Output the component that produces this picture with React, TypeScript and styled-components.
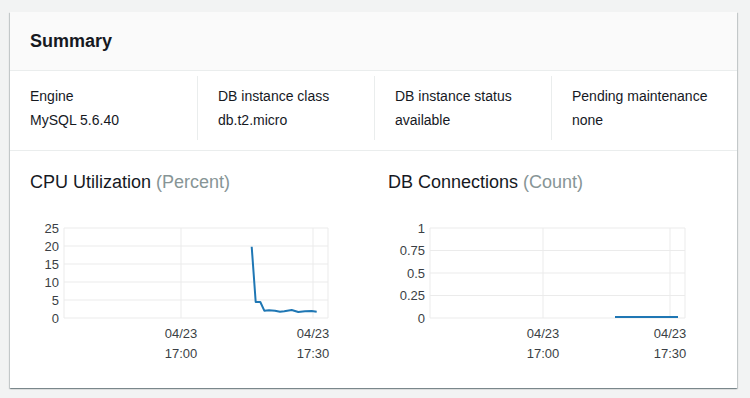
import React from 'react';
import styled, { createGlobalStyle } from 'styled-components';

const GlobalStyle = createGlobalStyle`
  html, body {
    margin: 0;
    padding: 0;
    background: #f2f3f3;
    font-family: 'Liberation Sans', Arial, sans-serif;
    color: #16191f;
  }
`;

const Page = styled.div`
  padding: 12px 13px 0 10px;
  height: 398px;
  box-sizing: border-box;
`;

const Card = styled.section`
  width: 727px;
  background: #fff;
  box-shadow: 0 1px 1px 0 rgba(0, 28, 36, 0.3),
    1px 1px 1px 0 rgba(0, 28, 36, 0.15), -1px 1px 1px 0 rgba(0, 28, 36, 0.15);
`;

const Header = styled.header`
  height: 58px;
  display: flex;
  align-items: center;
  padding: 0 20px;
  background: #fafafa;
  border-bottom: 1px solid #eaeded;
  font-size: 18px;
  font-weight: 700;
`;

const Details = styled.div`
  display: grid;
  grid-template-columns: 187px 177px 177px 1fr;
  padding: 5px 0 10px;
  border-bottom: 1px solid #eaeded;
`;

const Field = styled.div<{ $first?: boolean }>`
  padding: 8px 20px;
  border-left: ${(p) => (p.$first ? 'none' : '1px solid #eaeded')};
  font-size: 14px;
  line-height: 24px;
`;

const Charts = styled.div`
  display: grid;
  grid-template-columns: 358px 1fr;
  padding: 19px 0 22px;
`;

const ChartBox = styled.div`
  padding-left: 20px;
`;

const ChartTitle = styled.h3`
  margin: 0 0 22px;
  font-size: 18px;
  font-weight: 400;
  line-height: 24px;
`;

const Unit = styled.span`
  color: #879596;
`;

const Plot = styled.svg`
  display: block;
  font-family: 'Liberation Sans', Arial, sans-serif;
  font-size: 13px;
`;

type ChartProps = {
  left: number;
  right: number;
  ticks: string[];
  vlines: number[];
  points: [number, number][];
};

const TOP = 12;
const BOTTOM = 102;
const GRID = '#ebebeb';
const LABEL = '#3b3f45';

const Chart: React.FC<ChartProps> = ({ left, right, ticks, vlines, points }) => {
  const step = (BOTTOM - TOP) / (ticks.length - 1);
  return (
    <Plot width="330" height="150">
      {ticks.map((t, i) => {
        const y = TOP + i * step;
        return (
          <g key={t}>
            <line x1={left} x2={right} y1={y} y2={y} stroke={GRID} />
            <text x={left - 5} y={y + 4.5} textAnchor="end" fill={LABEL}>
              {t}
            </text>
          </g>
        );
      })}
      <line x1={left} x2={left} y1={TOP} y2={BOTTOM} stroke={GRID} />
      <line x1={right} x2={right} y1={TOP} y2={BOTTOM} stroke={GRID} />
      {vlines.map((x, i) => (
        <g key={x}>
          <line x1={x} x2={x} y1={TOP} y2={BOTTOM} stroke={GRID} />
          <text x={x} y={122} textAnchor="middle" fill={LABEL}>
            04/23
          </text>
          <text x={x} y={142} textAnchor="middle" fill={LABEL}>
            {i === 0 ? '17:00' : '17:30'}
          </text>
        </g>
      ))}
      <polyline
        points={points.map((p) => p.join(',')).join(' ')}
        fill="none"
        stroke="#1f77b4"
        strokeWidth="2"
        strokeLinejoin="round"
      />
    </Plot>
  );
};

// page coords of the CPU trace, shifted into the svg
const cpuRaw: [number, number][] = [
  [251.7, 245.7],
  [255.7, 301],
  [260.3, 301],
  [264.3, 309.7],
  [269, 309.3],
  [275, 309.7],
  [280, 310.7],
  [284.3, 310.3],
  [291.7, 309],
  [298.3, 311],
  [305, 310.3],
  [311.7, 310],
  [316.7, 310.7],
];
const cpuPoints = cpuRaw.map(([x, y]) => [x - 30, y - 215] as [number, number]);

const fields = [
  ['Engine', 'MySQL 5.6.40'],
  ['DB instance class', 'db.t2.micro'],
  ['DB instance status', 'available'],
  ['Pending maintenance', 'none'],
];

export default function App() {
  return (
    <>
      <GlobalStyle />
      <Page>
        <Card>
          <Header>Summary</Header>
          <Details>
            {fields.map(([k, v], i) => (
              <Field key={k} $first={i === 0}>
                <div>{k}</div>
                <div>{v}</div>
              </Field>
            ))}
          </Details>
          <Charts>
            <ChartBox>
              <ChartTitle>
                CPU Utilization <Unit>(Percent)</Unit>
              </ChartTitle>
              <Chart
                left={34}
                right={298}
                ticks={['25', '20', '15', '10', '5', '0']}
                vlines={[151, 283]}
                points={cpuPoints}
              />
            </ChartBox>
            <ChartBox>
              <ChartTitle>
                DB Connections <Unit>(Count)</Unit>
              </ChartTitle>
              <Chart
                left={42}
                right={297}
                ticks={['1', '0.75', '0.5', '0.25', '0']}
                vlines={[155, 282]}
                points={[
                  [227, 101],
                  [290, 101],
                ]}
              />
            </ChartBox>
          </Charts>
        </Card>
      </Page>
    </>
  );
}
